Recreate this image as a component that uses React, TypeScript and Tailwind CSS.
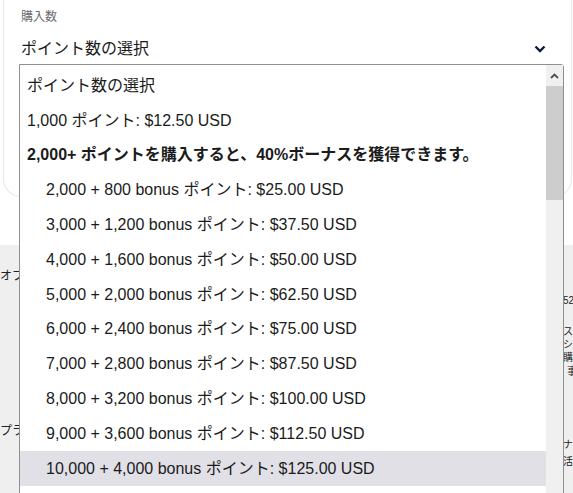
import React from 'react';

const font = { fontFamily: '"Liberation Sans", Arial, "Noto Sans CJK JP", sans-serif' };

interface Option {
  label: string;
  indent?: boolean;
  bold?: boolean;
  active?: boolean;
}

const options: Option[] = [
  { label: 'ポイント数の選択' },
  { label: '1,000 ポイント: $12.50 USD' },
  { label: '2,000+ ポイントを購入すると、40%ボーナスを獲得できます。', bold: true },
  { label: '2,000 + 800 bonus ポイント: $25.00 USD', indent: true },
  { label: '3,000 + 1,200 bonus ポイント: $37.50 USD', indent: true },
  { label: '4,000 + 1,600 bonus ポイント: $50.00 USD', indent: true },
  { label: '5,000 + 2,000 bonus ポイント: $62.50 USD', indent: true },
  { label: '6,000 + 2,400 bonus ポイント: $75.00 USD', indent: true },
  { label: '7,000 + 2,800 bonus ポイント: $87.50 USD', indent: true },
  { label: '8,000 + 3,200 bonus ポイント: $100.00 USD', indent: true },
  { label: '9,000 + 3,600 bonus ポイント: $112.50 USD', indent: true },
  { label: '10,000 + 4,000 bonus ポイント: $125.00 USD', indent: true, active: true },
  { label: '12,000 + 4,800 bonus ポイント: $150.00 USD', indent: true },
];

const Dropdown: React.FC = () => (
  <div className="absolute left-[19px] top-[64px] w-[545px] h-[440px] bg-white border border-[#8f8f8f] rounded-tr-[3px] flex">
    <ul className="flex-1 pt-[3.5px] overflow-hidden">
      {options.map((o) => (
        <li
          key={o.label}
          className={`h-[34.8px] flex items-center text-[16px] text-[#1b1b1b] whitespace-nowrap
            ${o.indent ? 'pl-[26px]' : 'pl-[7px]'}
            ${o.bold ? 'font-bold' : ''}
            ${o.active ? 'bg-[#e0e0e6]' : ''}`}
        >
          {o.label}
        </li>
      ))}
    </ul>
    <div className="w-[17px] bg-[#f0f0f0] flex flex-col">
      <div className="h-[21px] flex items-center justify-center">
        <svg width="9" height="6" viewBox="0 0 9 6">
          <path d="M1 5 L4.5 1.5 L8 5" fill="none" stroke="#505050" strokeWidth="1.8" />
        </svg>
      </div>
      <div className="h-[114px] bg-[#cdcdcd]" />
    </div>
  </div>
);

const App: React.FC = () => {
  return (
    <div className="relative w-[573px] h-[493px] overflow-hidden bg-white" style={font}>
      {/* card */}
      <div className="ml-[3px] mr-[1px] mt-[-20px] h-[217px] border border-t-0 border-[#e9e9e9] rounded-b-[18px] pl-[17px] pr-[9px] pt-[28px]">
        <div className="text-[12px] text-[#6b6b6b] leading-[18px]">購入数</div>
        <div className="mt-[10px] h-[32px] border-b-2 border-[#707070] flex items-center justify-between pb-[4px]">
          <span className="text-[16px] text-[#1b1b1b]">ポイント数の選択</span>
          <svg width="12" height="8" viewBox="0 0 12 8" className="mr-[16px]">
            <path d="M1.5 1.5 L6 6 L10.5 1.5" fill="none" stroke="#0f1b3d" strokeWidth="2.4" />
          </svg>
        </div>
      </div>

      {/* page content behind */}
      <div className="mt-[48px] h-[260px] bg-[#efefef] flex justify-between text-[12px] text-[#222]">
        <div className="w-[19px] overflow-hidden whitespace-nowrap pt-[23px] leading-[16px]">
          <div>オプション</div>
          <div className="mt-[139px]">プラン</div>
        </div>
        <div className="w-[10px] overflow-hidden whitespace-nowrap pt-[50px] leading-[11px] text-[10px]">
          <div>52</div>
          <div className="mt-[20px]">スカ</div>
          <div className="mt-[2px]">ショ</div>
          <div className="mt-[2px]">購入</div>
          <div className="pl-[4px] mt-[3px]">事</div>
          <div className="mt-[62px]">ナー</div>
          <div className="mt-[6px]">活動</div>
        </div>
      </div>

      <Dropdown />
    </div>
  );
};

export default App;
